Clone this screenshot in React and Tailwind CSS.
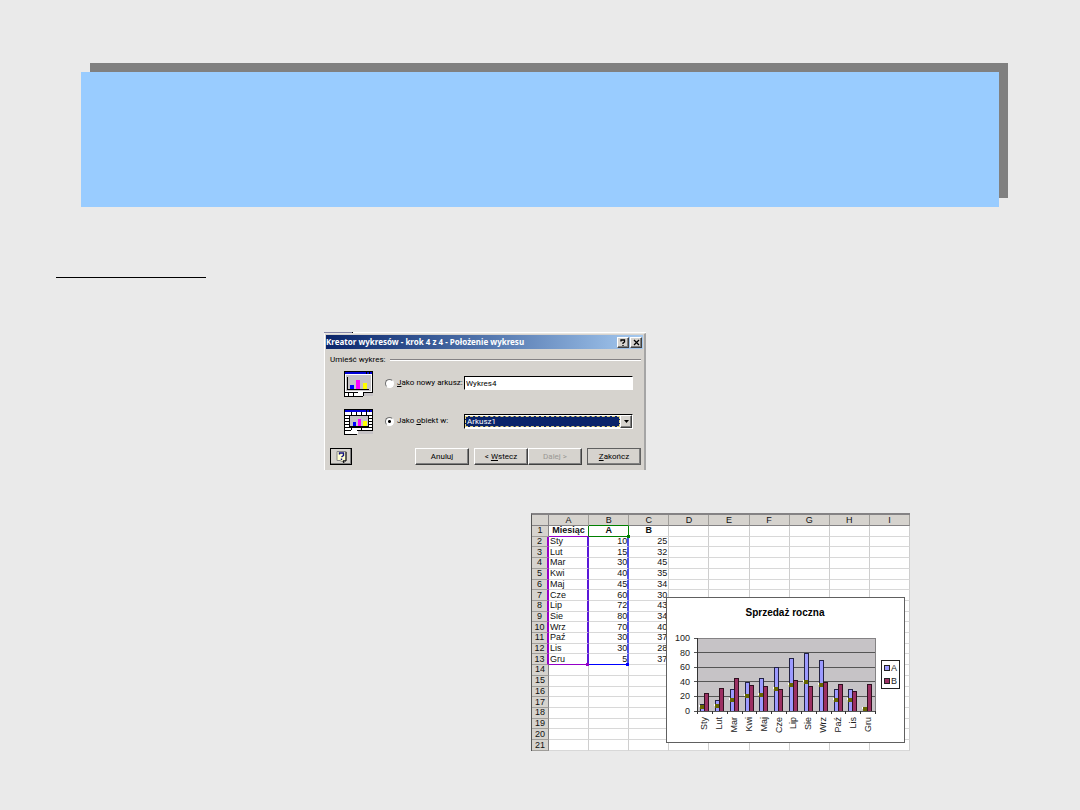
import React from "react";

const columns = ["A", "B", "C", "D", "E", "F", "G", "H", "I"];

const months = [
  { name: "Sty", a: 10, b: 25 },
  { name: "Lut", a: 15, b: 32 },
  { name: "Mar", a: 30, b: 45 },
  { name: "Kwi", a: 40, b: 35 },
  { name: "Maj", a: 45, b: 34 },
  { name: "Cze", a: 60, b: 30 },
  { name: "Lip", a: 72, b: 43 },
  { name: "Sie", a: 80, b: 34 },
  { name: "Wrz", a: 70, b: 40 },
  { name: "Paź", a: 30, b: 37 },
  { name: "Lis", a: 30, b: 28 },
  { name: "Gru", a: 5, b: 37 },
];

const raised =
  "border border-t-white border-l-white border-r-[#404040] border-b-[#404040] bg-[#d6d3ce] shadow-[inset_-1px_-1px_0_#808080]";

function ChartSheetIcon() {
  return (
    <svg width="30" height="27" viewBox="0 0 30 27" shapeRendering="crispEdges" aria-hidden="true">
      <rect x="0" y="0" width="29" height="22" fill="#000" />
      <rect x="1" y="1" width="27" height="2" fill="#0000d8" />
      <rect x="22" y="1" width="1" height="2" fill="#000" />
      <rect x="25" y="1" width="1" height="2" fill="#000" />
      <rect x="1" y="3" width="27" height="18" fill="#fff" />
      <rect x="2" y="4" width="25" height="16" fill="#c6c3c6" />
      <path d="M3.500 6v12.500H25" fill="none" stroke="#000" />
      <rect x="6" y="14" width="4" height="4" fill="#0000ff" />
      <rect x="12" y="9" width="4" height="9" fill="#ff00ff" />
      <rect x="19" y="12" width="4" height="6" fill="#ffff00" />
      <rect x="1" y="22" width="18" height="3" fill="#fff" />
      <path d="M.5 22v3.500H18.500M4.500 22v3M9.500 22v3M19.500 22v3" fill="none" stroke="#000" />
      <rect x="14" y="21" width="5" height="4" fill="#fff" />
      <rect x="20" y="22" width="9" height="3" fill="#c6c3c6" />
    </svg>
  );
}

function ChartObjectIcon() {
  return (
    <svg width="30" height="27" viewBox="0 0 30 27" shapeRendering="crispEdges" aria-hidden="true">
      <rect x="0" y="0" width="29" height="22" fill="#000" />
      <rect x="1" y="1" width="27" height="2" fill="#0000d8" />
      <rect x="22" y="1" width="1" height="2" fill="#000" />
      <rect x="25" y="1" width="1" height="2" fill="#000" />
      <rect x="1" y="3" width="27" height="18" fill="#fff" />
      <path
        d="M1 6.500h27M1 9.500h27M1 12.500h27M1 15.500h27M1 18.500h27M7.500 3v18M12.500 3v4M17.500 3v18M22.500 3v4"
        fill="none"
        stroke="#000"
      />
      <rect x="5" y="6" width="20" height="12" fill="#000" />
      <rect x="6" y="7" width="18" height="10" fill="#c6c3c6" />
      <rect x="9" y="13" width="3" height="4" fill="#0000ff" />
      <rect x="14" y="10" width="3" height="7" fill="#ff00ff" />
      <rect x="19" y="12" width="4" height="5" fill="#ffff00" />
      <rect x="0" y="22" width="14" height="3" fill="#fff" />
      <path d="M0 21.500h7M.5 22v3.500H13M13 21.500h16" fill="none" stroke="#000" />
      <rect x="7" y="21" width="6" height="4" fill="#fff" />
      <rect x="14" y="22" width="15" height="3" fill="#c6c3c6" />
    </svg>
  );
}

function Dialog() {
  return (
    <section
      aria-label="Kreator wykresów"
      className="w-[322px] bg-[#d6d3ce] font-[Roboto,'Noto_Sans',sans-serif] text-[8px] leading-[12px] text-black"
    >
      <div className="flex h-px bg-white">
        <div className="w-7 bg-[#8888a8]" />
        <div className="w-px bg-black" />
      </div>
      <div className="border-t border-r-2 border-l border-t-[#e8e6e2] border-l-white border-r-[#a5a5a5] pb-[5px]">
        <header className="mx-px mt-px flex h-[14px] items-center bg-linear-to-r from-[#0a246a] to-[#a6caf0] pr-px">
          <h2 className="flex-1 whitespace-nowrap font-['Noto_Sans','Open_Sans',sans-serif] font-bold text-white">
            Kreator wykresów - krok 4 z 4 - Położenie wykresu
          </h2>
          <button aria-label="Pomoc" className={`mr-px flex h-[11px] w-3 items-center justify-center ${raised}`}>
            <svg width="6" height="7" viewBox="0 0 6 7" aria-hidden="true">
              <path d="M1 2.500V1h3.500v2L3 4v1M3 6v1" fill="none" stroke="#000" strokeWidth="1.300" />
            </svg>
          </button>
          <button aria-label="Zamknij" className={`flex h-[11px] w-3 items-center justify-center ${raised}`}>
            <svg width="7" height="7" viewBox="0 0 7 7" aria-hidden="true">
              <path d="M1 1l5 5M6 1L1 6" stroke="#000" strokeWidth="1.300" />
            </svg>
          </button>
        </header>
        <fieldset className="pr-[3px] pl-[5px]">
          <div className="mt-[5px] flex items-center gap-1">
            <span className="whitespace-nowrap">Umieść wykres:</span>
            <div className="h-0.5 flex-1 border-t border-b border-t-[#848284] border-b-white" />
          </div>
          <div className="mt-0.5 flex items-center pr-2">
            <div className="ml-[14px] w-[41px] pt-[3px]">
              <ChartSheetIcon />
            </div>
            <input
              id="new-sheet"
              type="radio"
              name="place"
              className="size-[9px] appearance-none rounded-full border border-t-[#707070] border-r-white border-b-white border-l-[#707070] bg-white"
            />
            <label htmlFor="new-sheet" className="ml-[3px] w-[67px] whitespace-nowrap">
              <u>J</u>ako nowy arkusz:
            </label>
            <input
              type="text"
              aria-label="Nazwa nowego arkusza"
              defaultValue="Wykres4"
              className="h-[14px] min-w-0 flex-1 border border-t-black border-r-white border-b-white border-l-black bg-white px-px outline-none"
            />
          </div>
          <div className="mt-2 flex items-center pr-2">
            <div className="ml-[14px] w-[41px] pt-[3px]">
              <ChartObjectIcon />
            </div>
            <input
              id="as-object"
              type="radio"
              name="place"
              defaultChecked
              className="size-[9px] appearance-none rounded-full border border-t-[#707070] border-r-white border-b-white border-l-[#707070] bg-white bg-[radial-gradient(circle,#000_1px,transparent_2px)]"
            />
            <label htmlFor="as-object" className="ml-[3px] w-[67px] whitespace-nowrap">
              Jako <u>o</u>biekt w:
            </label>
            <div className="flex h-[15px] min-w-0 flex-1 border border-t-black border-r-white border-b-white border-l-black bg-white">
              <select
                aria-label="Arkusz docelowy"
                className="mt-px h-[11px] min-w-0 flex-1 appearance-none border border-dashed border-[#e0d080] bg-[#0a246a] px-px leading-[9px] text-white outline-none"
              >
                <option>Arkusz1</option>
              </select>
              <span className={`flex w-3 items-center justify-center ${raised}`}>
                <svg width="5" height="3" viewBox="0 0 5 3" aria-hidden="true">
                  <path d="M0 0h5L2.500 3z" />
                </svg>
              </span>
            </div>
          </div>
        </fieldset>
        <footer className="mt-3 flex items-center pr-[3px] pl-[5px]">
          <button
            aria-label="Asystent"
            className="flex h-[17px] w-[22px] items-center justify-center border border-black shadow-[inset_-1px_-1px_0_#808080]"
          >
            <svg width="11" height="12" viewBox="0 0 11 12" aria-hidden="true">
              <path d="M1 .5h9v9H7l1 2-4-2H1z" fill="#ffffd0" stroke="#888" />
              <path d="M10 1v9H7l1 2" fill="none" stroke="#000" />
              <path d="M3.500 3.500V2h4v2.500L5.500 6M5.500 7.500V9" fill="none" stroke="#101080" strokeWidth="1.400" />
            </svg>
          </button>
          <div className="ml-auto flex">
            <button className={`h-[17px] w-[54px] ${raised}`}>Anuluj</button>
            <button className={`ml-[5px] h-[17px] w-[54px] ${raised}`}>
              &lt; <u>W</u>stecz
            </button>
            <button disabled className={`h-[17px] w-[54px] text-[#9a9894] ${raised}`}>
              Dalej &gt;
            </button>
            <button className={`ml-[5px] h-[17px] w-[54px] outline outline-[#606060] -outline-offset-1 ${raised}`}>
              <u>Z</u>akończ
            </button>
          </div>
        </footer>
      </div>
    </section>
  );
}

function SalesChart() {
  const left = 31;
  const base = 114;
  const height = 73;
  const step = 178 / 12;
  const scale = (v) => (v * height) / 100;
  return (
    <svg
      width="239"
      height="147"
      viewBox="0 0 239 147"
      role="img"
      aria-label="Sprzedaż roczna"
      className="font-['Liberation_Sans',sans-serif]"
    >
      <rect x="0.500" y="0.500" width="238" height="145" fill="#fff" stroke="#606060" />
      <text x="119" y="19" textAnchor="middle" fontSize="10" fontWeight="700">
        Sprzedaż roczna
      </text>
      <g shapeRendering="crispEdges">
        <rect x={left} y={base - height} width="178" height={height} fill="#c6c3c6" stroke="#848284" />
        {[0, 20, 40, 60, 80, 100].map((v) => (
          <line
            key={v}
            x1={left - 3}
            x2={v === 100 ? left : left + 178}
            y1={base - scale(v)}
            y2={base - scale(v)}
            stroke="#555"
          />
        ))}
        <line x1={left} x2={left} y1={base - height} y2={base} stroke="#333" />
        {months.map((m, i) => {
          const x = Math.round(left + i * step) + 3;
          return (
            <g key={m.name}>
              <rect x={x} y={base - scale(m.a)} width="5" height={scale(m.a)} fill="#222244" />
              <rect x={x + 1} y={base - scale(m.a) + 1} width="3" height={scale(m.a) - 1} fill="#9c9aff" />
              <rect x={x + 4} y={base - scale(m.b)} width="5" height={scale(m.b)} fill="#301020" />
              <rect x={x + 5} y={base - scale(m.b) + 1} width="3" height={scale(m.b) - 1} fill="#9c3063" />
              <rect x={x - 1} y={base - scale(m.a) / 2 - 2} width="2" height="2" fill="#fff" />
              <rect x={x} y={base - scale(m.a) / 2 - 2} width="4" height="4" fill="#666600" />
              <line x1={x - 3} x2={x - 3} y1={base} y2={base + 3} stroke="#333" />
            </g>
          );
        })}
        <line x1={left + 178} x2={left + 178} y1={base} y2={base + 3} stroke="#333" />
      </g>
      <g fontSize="9" fill="#222">
        {[0, 20, 40, 60, 80, 100].map((v) => (
          <text key={v} x="24" y={base - scale(v) + 3} textAnchor="end">
            {v}
          </text>
        ))}
        {months.map((m, i) => {
          const x = left + (i + 0.5) * step + 3;
          return (
            <text key={m.name} x={x} y="120" textAnchor="end" transform={`rotate(-90 ${x} 120)`}>
              {m.name}
            </text>
          );
        })}
        <rect x="215.500" y="63.500" width="18" height="28" fill="#fff" stroke="#222" />
        <rect x="218.500" y="68.500" width="5" height="5" fill="#9c9aff" stroke="#222" />
        <rect x="218.500" y="81.500" width="5" height="5" fill="#9c3063" stroke="#222" />
        <text x="225" y="74">A</text>
        <text x="225" y="87">B</text>
      </g>
    </svg>
  );
}

function cellText(col, row) {
  if (row === 1) return { A: "Miesiąc", B: "A", C: "B" }[col] ?? "";
  const m = months[row - 2];
  if (!m) return "";
  return { A: m.name, B: m.a, C: m.b }[col] ?? "";
}

function cellClass(col, row) {
  const data = row >= 2 && row <= 13;
  let align = "text-right pr-px";
  if (row === 1) align = "text-center font-bold";
  else if (col === "A") align = "text-left pl-px";
  else if (col === "B") align = "text-right";
  let right = "border-r border-r-[#cecece]";
  let bottom = "border-b border-b-[#d8d8d8]";
  if (col === "A" && row === 1) {
    right = "border-r border-r-[#008000]";
    bottom = "border-b border-b-[#9400c8]";
  }
  if (col === "A" && data) right = "border-r-2 border-r-[#5a18d8]";
  if (col === "B" && row === 1) {
    right = "border-r border-r-[#008000]";
    bottom = "border-b border-b-[#008000]";
  }
  if (col === "B" && data) right = "border-r-2 border-r-[#5050e8]";
  if (col === "A" && row === 13) bottom = "border-b border-b-[#9400c8]";
  if (col === "B" && row === 13) bottom = "border-b border-b-[#0000ff]";
  return `relative py-0 ${align} ${right} ${bottom}`;
}

function Handle({ col, row }) {
  if (col === "B" && row === 1)
    return <span className="absolute -right-0.5 -bottom-0.5 z-10 size-[3px] bg-[#008000]" />;
  if (col === "A" && row === 13)
    return <span className="absolute -right-0.5 -bottom-0.5 z-10 size-[3px] bg-[#9400c8]" />;
  if (col === "B" && row === 13)
    return <span className="absolute -right-0.5 -bottom-0.5 z-10 size-[3px] bg-[#0000ff]" />;
  return null;
}

function Spreadsheet() {
  const rows = Array.from({ length: 21 }, (_, i) => i + 1);
  return (
    <section aria-label="Arkusz" className="relative w-[379px] bg-white">
      <table className="h-[238px] w-full table-fixed border-separate border-spacing-0 border-t-2 border-l border-t-[#848284] border-l-[#555] font-['Liberation_Sans',sans-serif] text-[9px] leading-[9px] text-[#111]">
        <thead>
          <tr className="h-[11px] bg-[#d6d3ce]">
            <th aria-label="Wiersz" className="w-[17px] border-r border-b border-[#848284] p-0" />
            {columns.map((c) => (
              <th
                key={c}
                scope="col"
                className={`border-r border-b border-r-[#a09e9a] p-0 font-normal ${
                  c === "B" ? "border-b-[#008000]" : "border-b-[#848284]"
                }`}
              >
                {c}
              </th>
            ))}
          </tr>
        </thead>
        <tbody>
          {rows.map((r) => (
            <tr key={r}>
              <th
                scope="row"
                className={`border-b border-b-[#a09e9a] bg-[#d6d3ce] p-0 text-center font-normal ${
                  r >= 2 && r <= 13 ? "border-r-2 border-r-[#9400c8]" : "border-r border-r-[#848284]"
                }`}
              >
                {r}
              </th>
              {columns.map((c) => (
                <td key={c} className={cellClass(c, r)}>
                  {cellText(c, r)}
                  <Handle col={c} row={r} />
                </td>
              ))}
            </tr>
          ))}
        </tbody>
      </table>
      <div className="absolute right-[5px] bottom-[7px] z-20">
        <SalesChart />
      </div>
    </section>
  );
}

export default function App() {
  return (
    <main className="flex min-h-screen flex-col bg-[#eaeaea] pt-[72px] pb-8">
      <header className="mr-[81px] ml-[81px] h-[135px] bg-[#99ccff] shadow-[9px_-9px_0_#808080]" />
      <hr className="mt-[70px] ml-14 w-[150px] border-t border-black" />
      <div className="mt-[54px] ml-[30%]">
        <Dialog />
      </div>
      <div className="mt-[43px] mr-[170px] flex justify-end">
        <Spreadsheet />
      </div>
    </main>
  );
}
